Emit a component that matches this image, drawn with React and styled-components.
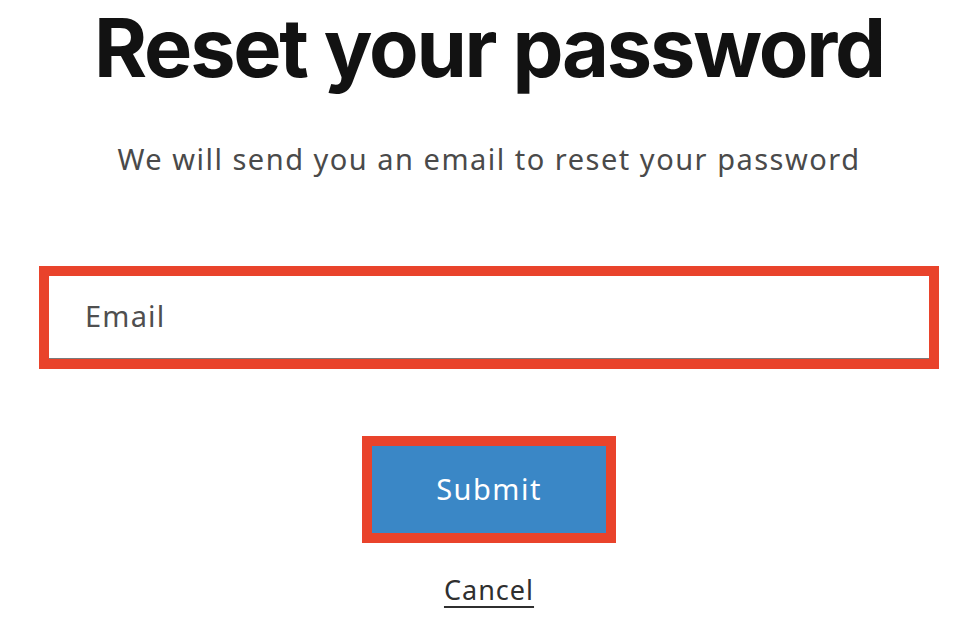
import React from 'react';
import styled, { createGlobalStyle } from 'styled-components';

const GlobalStyle = createGlobalStyle`
  html, body {
    margin: 0;
    padding: 0;
    background: #ffffff;
  }
  body {
    font-family: "Inter", "Liberation Sans", sans-serif;
  }
`;

const Page = styled.main`
  display: flex;
  flex-direction: column;
  align-items: center;
  width: 978px;
  height: 620px;
  overflow: hidden;
  box-sizing: border-box;
  padding-top: 0;
`;

const Title = styled.h1`
  margin: 0;
  font-family: "Inter", "Liberation Sans", sans-serif;
  font-size: 81px;
  line-height: 96px;
  font-weight: 700;
  color: #121212;
  letter-spacing: -2.2px;
`;

const Subtitle = styled.p`
  margin: 45px 0 0 0;
  font-family: "Noto Sans", "Liberation Sans", sans-serif;
  font-size: 29px;
  line-height: 36px;
  color: #4a4a4a;
  letter-spacing: 1.5px;
`;

const Form = styled.form`
  display: flex;
  flex-direction: column;
  align-items: center;
  width: 900px;
  margin-top: 89px;
`;

const EmailInput = styled.input`
  width: 100%;
  height: 103px;
  box-sizing: border-box;
  border: 10px solid #e9432b;
  background: #ffffff;
  box-shadow: inset 0 -1px 0 #7a7a7a;
  padding: 0 0 4px 36px;
  font-family: "Noto Sans", "Liberation Sans", sans-serif;
  font-size: 29px;
  letter-spacing: 1.2px;
  color: #333;
  outline: none;

  &::placeholder {
    color: #4f4f4f;
  }
`;

const SubmitButton = styled.button`
  margin-top: 67px;
  width: 254px;
  height: 107px;
  box-sizing: border-box;
  border: 10px solid #e9432b;
  background: #3a87c6;
  color: #ffffff;
  font-family: "Noto Sans", "Liberation Sans", sans-serif;
  font-size: 29px;
  letter-spacing: 1.5px;
  padding: 0 0 2px 0;
  cursor: pointer;
`;

const CancelLink = styled.a`
  margin-top: 28px;
  font-family: "Noto Sans", "Liberation Sans", sans-serif;
  font-size: 27px;
  letter-spacing: 1px;
  color: #2f2f2f;
  text-decoration: underline;
  text-underline-offset: 6px;
  text-decoration-thickness: 2px;
  cursor: pointer;
`;

export default function App() {
  return (
    <>
      <GlobalStyle />
      <Page>
        <Title>Reset your password</Title>
        <Subtitle>We will send you an email to reset your password</Subtitle>
        <Form onSubmit={(e) => e.preventDefault()}>
          <EmailInput type="email" placeholder="Email" />
          <SubmitButton type="submit">Submit</SubmitButton>
          <CancelLink>Cancel</CancelLink>
        </Form>
      </Page>
    </>
  );
}
